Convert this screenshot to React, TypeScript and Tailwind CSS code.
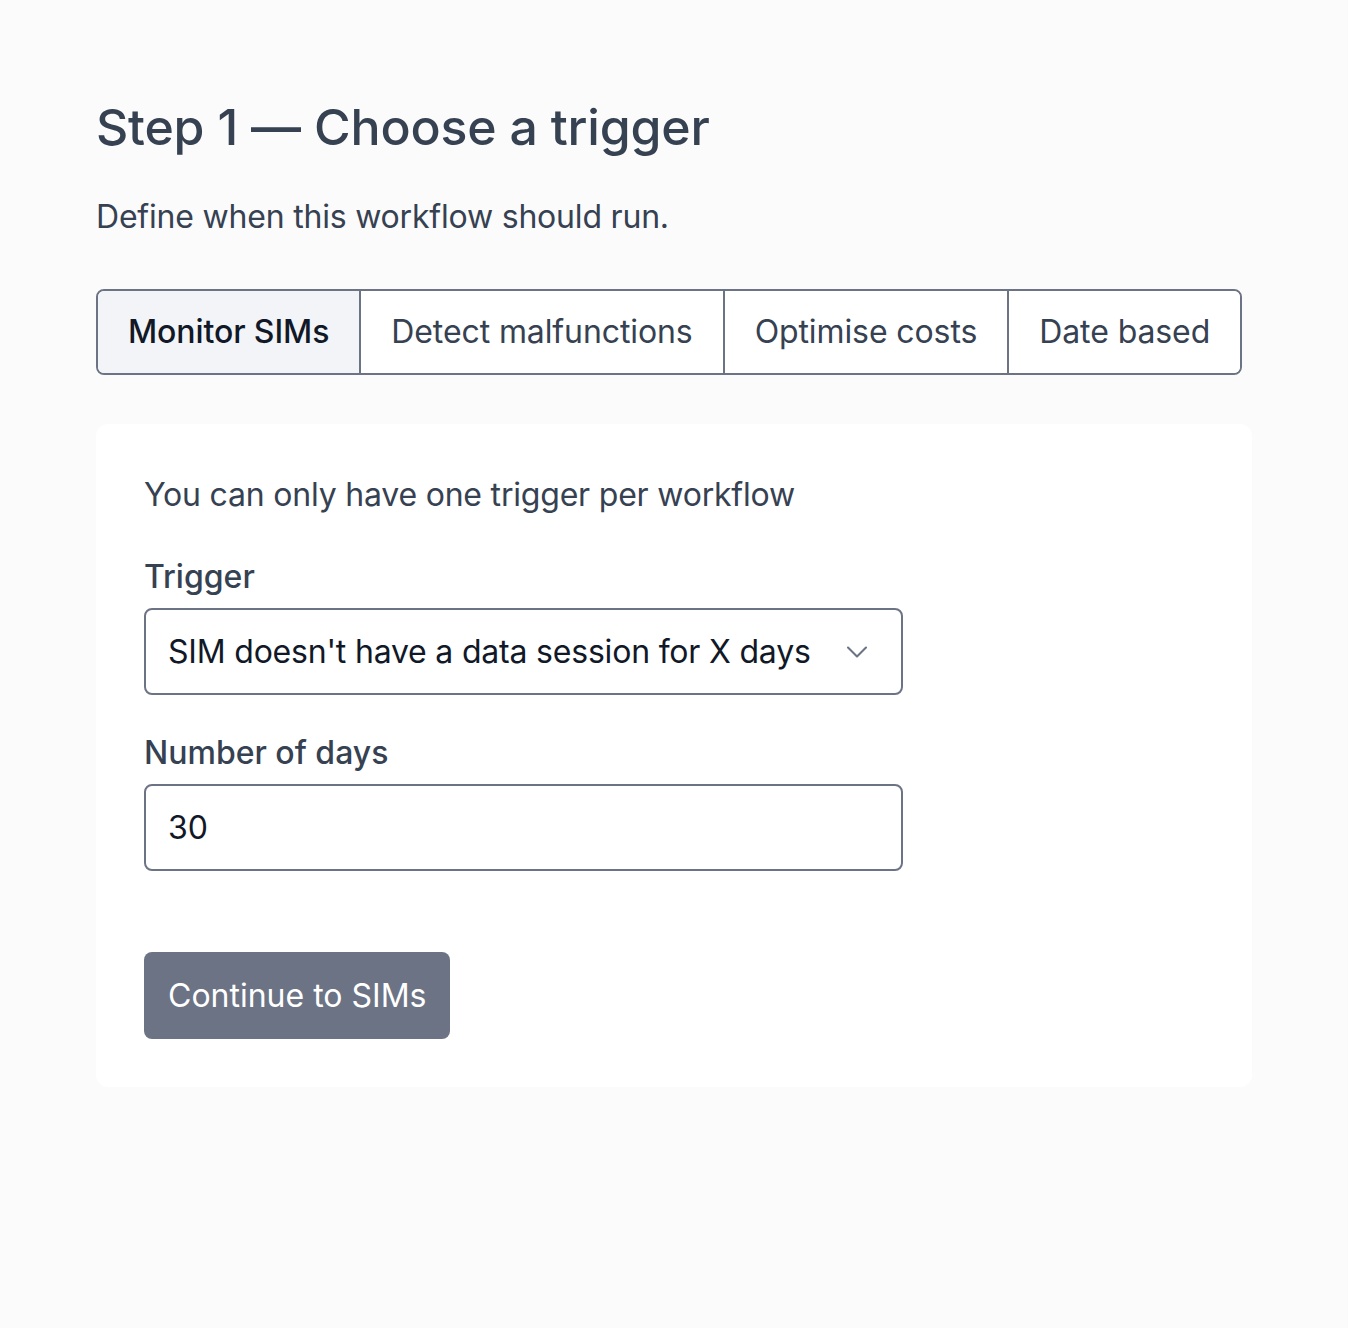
import { ChevronDown } from "lucide-react";

const tabs = ["Monitor SIMs", "Detect malfunctions", "Optimise costs", "Date based"];

export default function App() {
  const active = 0;

  return (
    <div className="min-h-[1328px] bg-[#fbfbfb] px-[96px] pt-[97px] font-['Inter',sans-serif] text-gray-700">
      {/* Header */}
      <h1 className="text-[50px] font-medium leading-[60px] tracking-[-0.2px] text-[#364152]">
        Step 1 — Choose a trigger
      </h1>
      <p className="mt-[41px] text-[32px] leading-[38px] tracking-[-0.2px] text-[#364152]">
        Define when this workflow should run.
      </p>

      {/* Trigger categories */}
      <div className="mt-[53px] flex w-max overflow-hidden rounded-lg border-2 border-[#6b7385]">
        {tabs.map((tab, i) => (
          <button
            key={tab}
            className={`flex h-[82px] shrink-0 items-center whitespace-nowrap px-[30px] text-[32px] tracking-[-0.1px] ${
              i > 0 ? "border-l-2 border-[#6b7385]" : ""
            } ${
              i === active
                ? "bg-[#f3f4f7] font-medium text-[#111827]"
                : "bg-white text-[#364152]"
            }`}
          >
            {tab}
          </button>
        ))}
      </div>

      {/* Card */}
      <div className="mt-[49px] w-[1156px] rounded-xl bg-white px-12 pb-12 pt-[52px]">
        <p className="text-[32px] leading-[38px] tracking-[-0.2px] text-[#364152]">
          You can only have one trigger per workflow
        </p>

        <label className="mt-[44px] block text-[32px] font-medium leading-[38px] text-[#364152]">
          Trigger
        </label>
        <div className="mt-[12px] flex h-[87px] w-[759px] items-center justify-between rounded-lg border-2 border-[#6b7385] bg-white pl-[22px] pr-[26px]">
          <span className="text-[32px] tracking-[-0.2px] text-[#111827]">
            SIM doesn't have a data session for X days
          </span>
          <ChevronDown className="h-[36px] w-[36px] text-[#6b7385]" strokeWidth={1.4} />
        </div>

        <label className="mt-[39px] block text-[32px] font-medium leading-[38px] text-[#364152]">
          Number of days
        </label>
        <div className="mt-[12px] flex h-[87px] w-[759px] items-center rounded-lg border-2 border-[#6b7385] bg-white pl-[22px]">
          <span className="text-[32px] text-[#111827]">30</span>
        </div>

        <button className="mt-[81px] flex h-[87px] items-center rounded-lg bg-[#6b7385] px-6 text-[32px] text-white">
          Continue to SIMs
        </button>
      </div>
    </div>
  );
}
